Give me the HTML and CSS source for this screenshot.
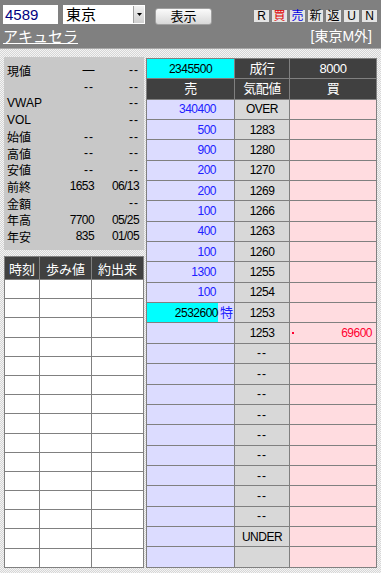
FILE: index.html
```html
<!DOCTYPE html>
<html>
<head>
    <meta charset="UTF-8">
    <title>板情報</title>
    <link rel="stylesheet" href="styles.css">
</head>
<body>
<div class="topbar">
    <div class="bar-row">
        <div class="code-box">4589</div>
        <div class="market-select">
            <span>東京</span>
            <span class="drop"><svg width="5" height="3" viewBox="0 0 5 3"><path d="M0 0h5L2.5 3z" fill="#000"/></svg></span>
        </div>
        <div class="show-btn">表示</div>
        <div class="mini-btns">
            <span class="mini">R</span>
            <span class="mini buy">買</span>
            <span class="mini sell">売</span>
            <span class="mini">新</span>
            <span class="mini">返</span>
            <span class="mini">U</span>
            <span class="mini">N</span>
        </div>
    </div>
    <div class="bar-row second">
        <a class="name">アキュセラ</a>
        <span class="market">[東京M外]</span>
    </div>
</div>
<div class="main">
    <div class="left">
        <div class="info">
            <span>現値</span><span class="num">—</span><span class="num dash">--</span>
            <span></span><span class="num dash">--</span><span class="num dash">--</span>
            <span>VWAP</span><span></span><span class="num dash">--</span>
            <span>VOL</span><span></span><span class="num dash">--</span>
            <span>始値</span><span class="num dash">--</span><span class="num dash">--</span>
            <span>高値</span><span class="num dash">--</span><span class="num dash">--</span>
            <span>安値</span><span class="num dash">--</span><span class="num dash">--</span>
            <span>前終</span><span class="num">1653</span><span class="num">06/13</span>
            <span>金額</span><span></span><span class="num dash">--</span>
            <span>年高</span><span class="num">7700</span><span class="num">05/25</span>
            <span>年安</span><span class="num">835</span><span class="num">01/05</span>
        </div>
        <table class="ticks">
            <tr class="head"><td>時刻</td><td>歩み値</td><td>約出来</td></tr>
            <tr><td></td><td></td><td></td></tr>
            <tr><td></td><td></td><td></td></tr>
            <tr><td></td><td></td><td></td></tr>
            <tr><td></td><td></td><td></td></tr>
            <tr><td></td><td></td><td></td></tr>
            <tr><td></td><td></td><td></td></tr>
            <tr><td></td><td></td><td></td></tr>
            <tr><td></td><td></td><td></td></tr>
            <tr><td></td><td></td><td></td></tr>
            <tr><td></td><td></td><td></td></tr>
            <tr><td></td><td></td><td></td></tr>
            <tr><td></td><td></td><td></td></tr>
            <tr><td></td><td></td><td></td></tr>
            <tr><td></td><td></td><td></td></tr>
            <tr><td></td><td></td><td></td></tr>
        </table>
    </div>
    <table class="board">
        <tr><td class="cyan">2345500</td><td class="dark">成行</td><td class="dark">8000</td></tr>
        <tr><td class="dark">売</td><td class="dark">気配値</td><td class="dark">買</td></tr>
        <tr><td class="ask">340400</td><td class="price">OVER</td><td class="bid"></td></tr>
        <tr><td class="ask">500</td><td class="price">1283</td><td class="bid"></td></tr>
        <tr><td class="ask">900</td><td class="price">1280</td><td class="bid"></td></tr>
        <tr><td class="ask">200</td><td class="price">1270</td><td class="bid"></td></tr>
        <tr><td class="ask">200</td><td class="price">1269</td><td class="bid"></td></tr>
        <tr><td class="ask">100</td><td class="price">1266</td><td class="bid"></td></tr>
        <tr><td class="ask">400</td><td class="price">1263</td><td class="bid"></td></tr>
        <tr><td class="ask">100</td><td class="price">1260</td><td class="bid"></td></tr>
        <tr><td class="ask">1300</td><td class="price">1255</td><td class="bid"></td></tr>
        <tr><td class="ask">100</td><td class="price">1254</td><td class="bid"></td></tr>
        <tr><td class="ask special"><div class="sp"><span class="sp-qty">2532600</span><span class="sp-mark">特</span></div></td><td class="price">1253</td><td class="bid"></td></tr>
        <tr><td class="ask"></td><td class="price">1253</td><td class="bid"><div class="bid-in"><span class="dot"></span><span>69600</span></div></td></tr>
        <tr><td class="ask"></td><td class="price dash">--</td><td class="bid"></td></tr>
        <tr><td class="ask"></td><td class="price dash">--</td><td class="bid"></td></tr>
        <tr><td class="ask"></td><td class="price dash">--</td><td class="bid"></td></tr>
        <tr><td class="ask"></td><td class="price dash">--</td><td class="bid"></td></tr>
        <tr><td class="ask"></td><td class="price dash">--</td><td class="bid"></td></tr>
        <tr><td class="ask"></td><td class="price dash">--</td><td class="bid"></td></tr>
        <tr><td class="ask"></td><td class="price dash">--</td><td class="bid"></td></tr>
        <tr><td class="ask"></td><td class="price dash">--</td><td class="bid"></td></tr>
        <tr><td class="ask"></td><td class="price dash">--</td><td class="bid"></td></tr>
        <tr><td class="ask"></td><td class="price">UNDER</td><td class="bid"></td></tr>
        <tr><td class="ask"></td><td class="price"></td><td class="bid"></td></tr>
    </table>
</div>
</body>
</html>
```

FILE: styles.css
```css
body {
    margin: 0;
    font-family: "Liberation Sans", "Noto Sans CJK JP", sans-serif;
    font-size: 12px;
    color: #000;
    background: repeating-conic-gradient(#d6d6d6 0 25%, #f4f4f4 0 50%) 0 0 / 2px 2px;
    width: 381px;
    height: 573px;
    overflow: hidden;
}
.topbar {
    background-color: #808080;
    height: 49px;
    padding: 5px 3px 0 3px;
    box-sizing: border-box;
    border-bottom: 1px solid #a8a8a8;
}
.bar-row {
    display: flex;
    align-items: flex-start;
    height: 20px;
}
.bar-row.second {
    justify-content: space-between;
    margin-top: 3px;
    padding-right: 6px;
}
.code-box {
    width: 53px;
    height: 19px;
    background-color: white;
    color: #000080;
    font-size: 15px;
    line-height: 19px;
    padding-left: 2px;
}
.market-select {
    margin-left: 5px;
    width: 82px;
    height: 19px;
    background-color: white;
    display: flex;
    justify-content: space-between;
    font-size: 15px;
    line-height: 19px;
}
.market-select span:first-child {
    padding-left: 3px;
}
.drop {
    width: 10px;
    height: 17px;
    margin: 1px;
    background: linear-gradient(#f2f2f2, #d0d0d0);
    border-left: 1px solid #a0a0a0;
    display: flex;
    align-items: center;
    justify-content: center;
}
.show-btn {
    margin-left: 10px;
    margin-top: 3px;
    width: 55px;
    height: 15px;
    border: 1px solid #a0a0a0;
    border-radius: 3px;
    background: linear-gradient(#fbfbfb, #d8d8d8);
    text-align: center;
    font-size: 13px;
    line-height: 15px;
}
.mini-btns {
    margin-left: auto;
    margin-top: 5px;
    display: flex;
    gap: 3px;
    margin-right: 1px;
}
.mini {
    width: 15px;
    height: 12px;
    background-color: #e4e4e4;
    text-align: center;
    font-size: 12px;
    line-height: 12px;
}
.mini.buy {
    color: #e00000;
}
.mini.sell {
    color: #0000e0;
}
.name {
    color: white;
    text-decoration: underline;
    font-size: 15px;
    line-height: 17px;
}
.market {
    color: white;
    font-size: 14px;
    line-height: 17px;
}
.main {
    display: flex;
    padding: 8px 4px 0 4px;
    gap: 2px;
    align-items: flex-start;
}
.left {
    width: 140px;
}
.info {
    background-color: #c8c8c8;
    height: 193px;
    box-sizing: border-box;
    padding: 5px 5px 0 3px;
    display: grid;
    grid-template-columns: 40px 47px 1fr;
    grid-auto-rows: 16.6px;
    align-items: center;
    font-size: 12px;
}
.num {
    text-align: right;
    letter-spacing: -0.6px;
}
.dash {
    letter-spacing: 1px;
}
.ticks {
    margin-top: 6px;
    width: 140px;
    height: 312px;
    border-collapse: collapse;
    table-layout: fixed;
    background-color: white;
}
.ticks td {
    border: 1px solid #808080;
    padding: 0;
}
.ticks td:nth-child(1) {
    width: 34px;
}
.ticks td:nth-child(2) {
    width: 51px;
}
.ticks .head td {
    height: 22px;
    background-color: #404040;
    color: white;
    text-align: center;
    font-size: 13px;
}
.board {
    margin-top: 1px;
    width: 231px;
    border-collapse: collapse;
    table-layout: fixed;
}
.board tr {
    height: 20.35px;
}
.board td {
    border: 1px solid #808080;
    padding: 0;
    text-align: center;
    font-size: 12px;
    line-height: 14px;
    letter-spacing: -0.5px;
}
.board td:nth-child(1) {
    width: 87px;
}
.board td:nth-child(2) {
    width: 54px;
}
.board td.dash {
    letter-spacing: 1px;
}
.board .cyan {
    background-color: #00ffff;
}
.board .dark {
    background-color: #404040;
    color: white;
    font-size: 13px;
}
.board .ask {
    background-color: #dcdcff;
    color: #2020ff;
    text-align: right;
    padding-right: 18px;
}
.board .price {
    background-color: #d8d8d8;
}
.board .bid {
    background-color: #ffdce0;
    color: #ff0030;
    text-align: right;
    padding-right: 4px;
}
.board .special {
    padding: 0;
}
.sp {
    display: flex;
    height: 19px;
}
.sp-qty {
    width: 71px;
    background-color: #00ffff;
    color: #000;
    display: flex;
    align-items: center;
    justify-content: flex-end;
}
.sp-mark {
    padding-left: 2px;
    display: flex;
    align-items: center;
    font-size: 13px;
}
.bid-in {
    display: flex;
    justify-content: space-between;
    align-items: center;
}
.dot {
    width: 2px;
    height: 2px;
    background-color: #ff0030;
    margin-left: 2px;
}
```
